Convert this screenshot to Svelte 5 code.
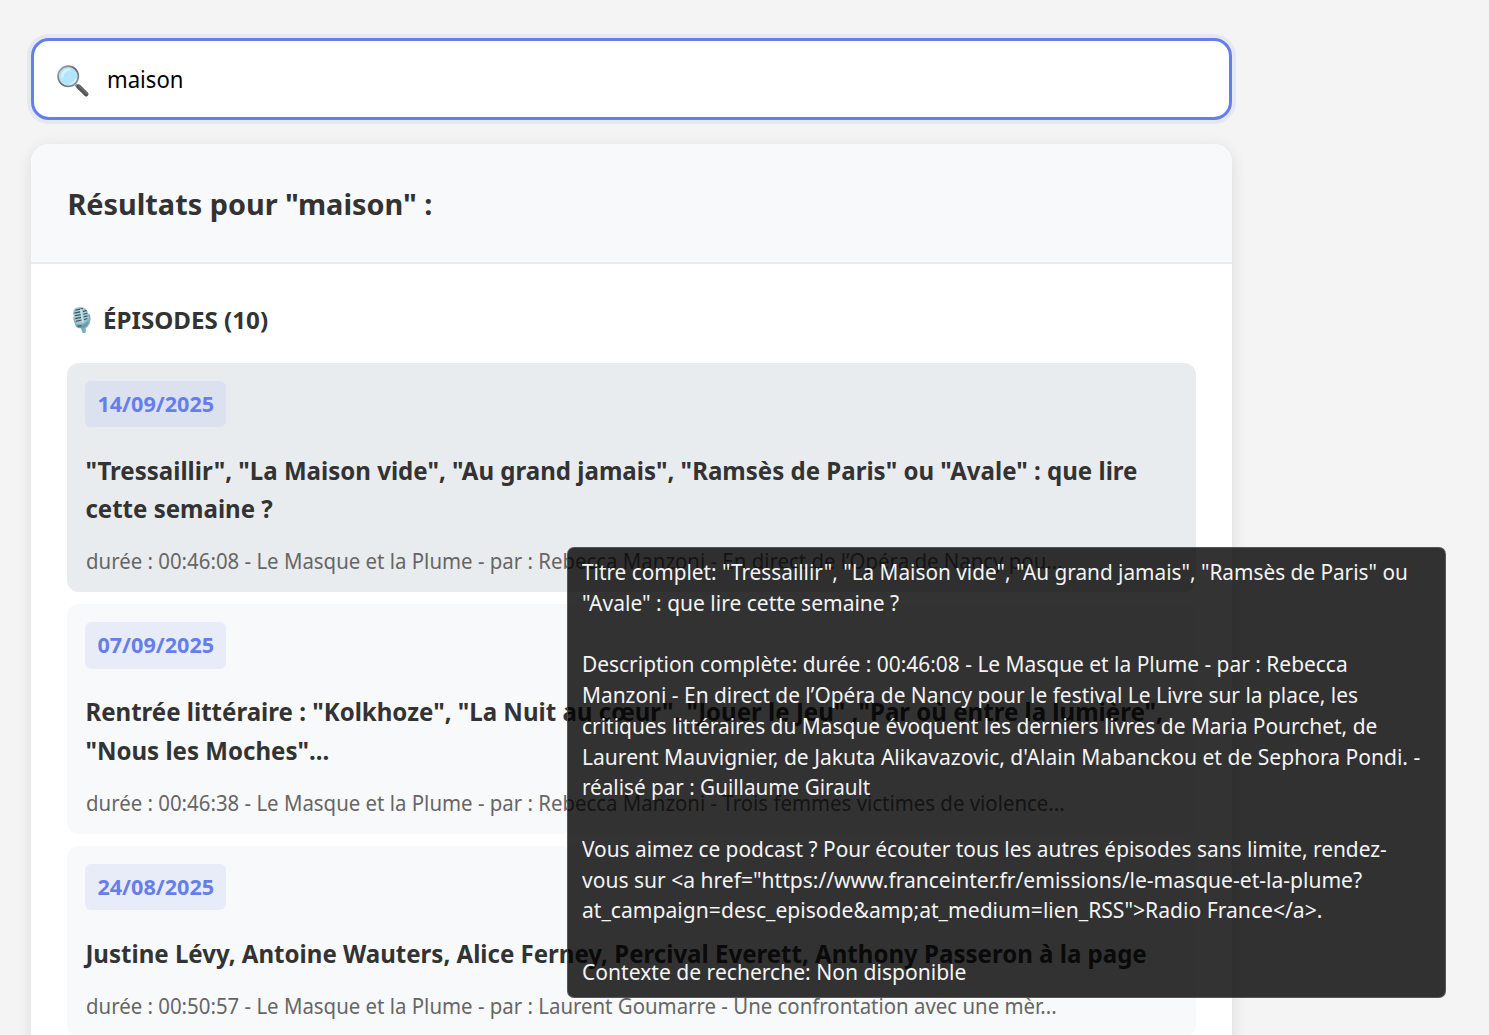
<script>
  const query = 'maison';

  const episodes = [
    {
      date: '14/09/2025',
      title: ['"Tressaillir", "La Maison vide", "Au grand jamais", "Ramsès de Paris" ou "Avale" : que lire', 'cette semaine ?'],
      description: 'durée : 00:46:08 - Le Masque et la Plume - par : Rebecca Manzoni - En direct de l’Opéra de Nancy pou...',
      active: true
    },
    {
      date: '07/09/2025',
      title: ['Rentrée littéraire : "Kolkhoze", "La Nuit au cœur", "Jouer le Jeu" ,"Par où entre la lumière",', '"Nous les Moches"...'],
      description: 'durée : 00:46:38 - Le Masque et la Plume - par : Rebecca Manzoni - Trois femmes victimes de violence...'
    },
    {
      date: '24/08/2025',
      title: ['Justine Lévy, Antoine Wauters, Alice Ferney, Percival Everett, Anthony Passeron à la page'],
      description: 'durée : 00:50:57 - Le Masque et la Plume - par : Laurent Goumarre - Une confrontation avec une mèr...'
    }
  ];

  // Each tooltip line carries the width it is condensed to.
  const tooltip = [
    ['Titre complet: "Tressaillir", "La Maison vide", "Au grand jamais", "Ramsès de Paris" ou', 826],
    ['"Avale" : que lire cette semaine ?', 317],
    ['', 0],
    ['Description complète: durée : 00:46:08 - Le Masque et la Plume - par : Rebecca', 766],
    ['Manzoni - En direct de l’Opéra de Nancy pour le festival Le Livre sur la place, les', 776],
    ['critiques littéraires du Masque évoquent les derniers livres de Maria Pourchet, de', 795],
    ["Laurent Mauvignier, de Jakuta Alikavazovic, d'Alain Mabanckou et de Sephora Pondi. -", 838],
    ['réalisé par : Guillaume Girault', 288],
    ['', 0],
    ['Vous aimez ce podcast ? Pour écouter tous les autres épisodes sans limite, rendez-', 805],
    ['vous sur <a href="https://www.franceinter.fr/emissions/le-masque-et-la-plume?', 780],
    ['at_campaign=desc_episode&amp;at_medium=lien_RSS">Radio France</a>.', 740],
    ['', 0],
    ['Contexte de recherche: Non disponible', 384]
  ];

  function fit(node, width) {
    const natural = node.offsetWidth;
    if (natural && width) node.style.transform = `scaleX(${width / natural})`;
  }
</script>

<main class="page">
  <div class="search">
    <svg class="lens" viewBox="0 0 36 36" aria-hidden="true">
      <defs>
        <linearGradient id="rim" x1="0" y1="0" x2="1" y2="1">
          <stop offset="0" stop-color="#b0b0b0" />
          <stop offset=".5" stop-color="#666" />
          <stop offset="1" stop-color="#9a9a9a" />
        </linearGradient>
      </defs>
      <path d="M20.5 21.5l4.5 4.5" stroke="#929292" stroke-width="3" />
      <path d="M23.6 23.7l7.6 7.5" stroke="#555" stroke-width="4.6" stroke-linecap="round" />
      <path d="M23.8 22.7l8.4 8" stroke="#727272" stroke-width="1.2" stroke-linecap="round" />
      <circle cx="13.2" cy="13.3" r="10.2" fill="#b3e5fc" stroke="url(#rim)" stroke-width="1.6" />
      <path d="M6.4 14.5C5.7 9.8 9.2 5.5 14 5.6c2.2 0 2.2 1.5.4 1.9-4 .7-5.3 3-6 6.4-.3 1.7-1.7 2-2 .6z" fill="#d6f2ff" />
      <path d="M20.8 16c-1 2.6-3 4.3-5.5 4.8" fill="none" stroke="#d6f2ff" stroke-width="1.5" stroke-linecap="round" />
    </svg>
    <span class="query" use:fit={76.5}>{query}</span>
  </div>

  <section class="results">
    <header class="results-head"><h3>Résultats pour "{query}" :</h3></header>
    <div class="group">
      <h4>
        <svg class="mic" viewBox="0 0 20 29" aria-hidden="true">
          <path d="M17.7 8.5c2.2 6.9-.8 13.1-6.2 14.8" fill="none" stroke="#82aeb9" stroke-width="2.2" />
          <path d="M8.5 20l5.8-1.2.4 8.5c-1.2 1.2-3.2 1-3.8.3z" fill="#82aeb9" />
          <path d="M1.3 11.5l2.6 9.3c1.7 2.5 6 3.3 9.7 1.4 2.9-1.6 4-4.1 3.8-6.9L17 7z" fill="#6d9ba8" />
          <path d="M1.1 7.5C.7 3.2 3.8.8 8.2.7c4.4-.1 7.6 1.8 8.4 5.5l.6 7.1c-1.6 4.2-9 7.2-13.5 5.2z" fill="#a3cbd4" />
          <path d="M3.6 4.1l8-1.7M2.5 7.2l6-1.3M3 10l6.2-1.2M3.4 13l6.3-1.3M4 16l6.4-1.5M11.5 5.5l4-.8M11.8 8.4l4.3-1M12.1 11.3l4.3-1.1M12.5 14.2l3.7-1.3" stroke="#3d555d" stroke-width="1.25" />
          <path d="M9.3 3.1l2.2 14.6" stroke="#c4e2e7" stroke-width="1.7" />
          <path d="M2.1 13.2l2 5.8c4.3 1.5 9.5-.4 13-4.7" fill="none" stroke="#83b3bf" stroke-width="1.6" />
          <path d="M6 21l4-.5" stroke="#386574" stroke-width="1.3" />
        </svg>
        <span use:fit={165}>ÉPISODES (10)</span>
      </h4>
      <ul>
        {#each episodes as episode}
          <li class:active={episode.active}>
            <time>{episode.date}</time>
            <div class="title">
              {#each episode.title as line}<span>{line}</span>{/each}
            </div>
            <p><span>{episode.description}</span></p>
          </li>
        {/each}
      </ul>
    </div>
  </section>

  <div class="tooltip" role="tooltip">
    {#each tooltip as [line, width]}
      <div class="tip-line"><span use:fit={width}>{line}</span></div>
    {/each}
  </div>
</main>

<style>
  :global(body) {
    background: #f4f4f4;
    overflow: hidden;
  }
  .page {
    box-sizing: border-box;
    height: 1035px;
    overflow: hidden;
    padding: 38px 0 0 31.4px;
    position: relative;
    font-family: 'Noto Sans', sans-serif;
    color: #333;
  }
  .search {
    box-sizing: border-box;
    width: 1200.4px;
    height: 82px;
    display: flex;
    align-items: center;
    padding-left: 21px;
    background: #fff;
    border: 3px solid #667eea;
    border-radius: 18px;
    box-shadow: 0 0 0 4px rgba(102, 126, 234, 0.1);
  }
  .lens {
    width: 36px;
    height: 36px;
    margin-top: 3px;
  }
  .query {
    margin-left: 15.3px;
    color: #000;
    font-size: 24px;
    line-height: 32px;
    transform-origin: left center;
  }
  .results {
    width: 1200.4px;
    margin-top: 24.3px;
    background: #fff;
    border-radius: 18px;
    box-shadow: 0 3px 15px rgba(0, 0, 0, 0.1);
  }
  .results-head {
    padding: 36.7px 36px 35.3px;
    background: #f8f9fb;
    border-bottom: 2px solid #e9ecef;
    border-radius: 18px 18px 0 0;
  }
  h3,
  h4,
  p {
    margin: 0;
  }
  h3 {
    font-size: 28.85px;
    line-height: 45.5px;
  }
  .group {
    padding: 36px;
  }
  h4 {
    display: flex;
    align-items: center;
    margin-bottom: 23.8px;
    padding-left: 5px;
    gap: 11.8px;
    font-size: 24px;
    line-height: 39px;
    font-weight: 700;
    white-space: nowrap;
  }
  h4 span {
    transform-origin: left center;
  }
  .mic {
    width: 19px;
    height: 28px;
    margin-top: 1px;
  }
  ul {
    display: flex;
    flex-direction: column;
    gap: 12px;
    margin: 0;
    padding: 0;
    list-style: none;
  }
  li {
    padding: 18px;
    background: #f8f9fb;
    border-radius: 12px;
  }
  li.active {
    background: #e9ecef;
  }
  time {
    display: block;
    width: fit-content;
    padding: 6px 12px;
    background: rgba(102, 126, 234, 0.1);
    border-radius: 6px;
    color: #667eea;
    font-size: 21.6px;
    line-height: 34.5px;
    font-weight: 700;
  }
  .title {
    margin-top: 24.7px;
    font-size: 24.05px;
    line-height: 38.6px;
    font-weight: 700;
    white-space: nowrap;
  }
  .title span {
    display: block;
  }
  p {
    margin-top: 16.3px;
    margin-bottom: -2px;
    padding-left: 0.5px;
    color: #666;
    font-size: 21.6px;
    line-height: 31px;
    white-space: nowrap;
  }
  p span {
    display: inline-block;
    transform: scaleX(0.9448);
    transform-origin: left center;
  }
  .tooltip {
    position: absolute;
    left: 566.5px;
    top: 547px;
    box-sizing: border-box;
    width: 879.5px;
    height: 451px;
    padding: 9px 14.5px;
    background: rgba(0, 0, 0, 0.8);
    border: 1px solid rgba(110, 110, 110, 0.6);
    border-radius: 7px;
    color: #f4f4f4;
  }
  .tip-line {
    height: 30.77px;
    font-size: 22.4px;
    line-height: 30.77px;
    white-space: pre;
  }
  .tip-line span {
    display: inline-block;
    transform-origin: left center;
  }
</style>
